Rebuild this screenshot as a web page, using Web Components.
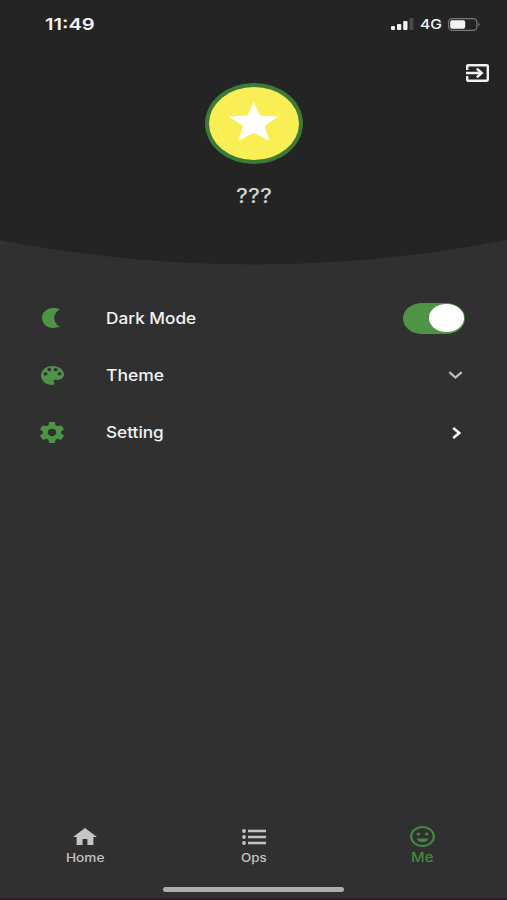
<!DOCTYPE html>
<html lang="en">
<head>
<meta charset="utf-8">
<title>Me</title>
<style>
    body {
        margin: 0;
        background-color: #303030;
        font-family: Inter, "Liberation Sans", sans-serif;
        color: #f2f2f2;
    }
</style>
</head>
<body>
<me-page></me-page>

<script>
const icons = {
    // each one: viewBox, markup
    exit: ['0 0 23 18', '<g fill="none" stroke="currentColor" stroke-width="2.4"><path d="M1.2 6V2.4Q1.2 1.2 2.6 1.2H20.3Q21.8 1.2 21.8 2.4V15.6Q21.8 16.8 20.3 16.8H2.6Q1.2 16.8 1.2 15.6V12M0 9H15.5M10.8 4.6L15.8 9L10.8 13.4"/></g>'],
    star: ['0 0 49 39', '<path d="M24.5 0L31 13.5L49 14.6L35.5 24L40.5 39L24.5 30.5L9.5 39L14 24L0 14.6L18.5 13.5Z"/>'],
    moon: ['0 0 18 20', '<path d="M18 1.4C15.5 .3 13 0 11.5 0C4.5 0 0 4.5 0 10S4.5 20 11.5 20C13 20 15.5 19.7 18 18.6C14 17 12.3 13 12.3 10S14 3 18 1.4Z"/>'],
    palette: ['3 3 18 18', '<path d="M12 3c-4.97 0-9 4.03-9 9s4.03 9 9 9c.83 0 1.5-.67 1.5-1.5 0-.39-.15-.74-.39-1.01-.23-.26-.38-.61-.38-.99 0-.83.67-1.5 1.5-1.5H16c2.76 0 5-2.24 5-5 0-4.42-4.03-8-9-8zm-5.5 9c-.83 0-1.5-.67-1.5-1.5S5.67 9 6.5 9 8 9.67 8 10.5 7.33 12 6.5 12zm3-4C8.67 8 8 7.33 8 6.5S8.67 5 9.5 5s1.5.67 1.5 1.5S10.33 8 9.5 8zm5 0c-.83 0-1.5-.67-1.5-1.5S13.67 5 14.5 5s1.5.67 1.5 1.5S15.33 8 14.5 8zm3 4c-.83 0-1.5-.67-1.5-1.5S16.67 9 17.5 9s1.5.67 1.5 1.5-.67 1.5-1.5 1.5z"/>'],
    gear: ['2.2 2 19.6 20', '<path d="M19.43 12.98c.04-.32.07-.64.07-.98s-.03-.66-.07-.98l2.11-1.65c.19-.15.24-.42.12-.64l-2-3.46c-.12-.22-.39-.3-.61-.22l-2.49 1c-.52-.4-1.08-.73-1.69-.98l-.38-2.65C14.46 2.18 14.25 2 14 2h-4c-.25 0-.46.18-.49.42l-.38 2.65c-.61.25-1.17.59-1.69.98l-2.49-1c-.23-.09-.49 0-.61.22l-2 3.46c-.13.22-.07.49.12.64l2.11 1.65c-.04.32-.07.65-.07.98s.03.66.07.98l-2.11 1.65c-.19.15-.24.42-.12.64l2 3.46c.12.22.39.3.61.22l2.49-1c.52.4 1.08.73 1.69.98l.38 2.65c.03.24.24.42.49.42h4c.25 0 .46-.18.49-.42l.38-2.65c.61-.25 1.17-.59 1.69-.98l2.49 1c.23.09.49 0 .61-.22l2-3.46c.12-.22.07-.49-.12-.64l-2.11-1.65zM12 15.5c-1.93 0-3.5-1.57-3.5-3.5s1.57-3.5 3.5-3.5 3.5 1.57 3.5 3.5-1.57 3.5-3.5 3.5z"/>'],
    down: ['0 0 15 8', '<path d="M1.3 1.2L7.5 6.5L13.7 1.2" fill="none" stroke="currentColor" stroke-width="2.3"/>'],
    right: ['0 0 9 12', '<path d="M1.2 1L7.3 6L1.2 11" fill="none" stroke="currentColor" stroke-width="2.5"/>'],
    home: ['2 3 20 17', '<path d="M10 20v-6h4v6h5v-8h3L12 3 2 12h3v8z"/>'],
    list: ['0 0 24 16', '<circle cx="2" cy="2" r="1.9"/><circle cx="2" cy="8" r="1.9"/><circle cx="2" cy="14" r="1.9"/><path d="M6 .8h18v2.4H6zM6 6.8h18v2.4H6zM6 12.8h18v2.4H6z"/>'],
    smile: ['0 0 25 22', '<ellipse cx="12.5" cy="11" rx="11.3" ry="9.9" fill="none" stroke="currentColor" stroke-width="2.1"/><ellipse cx="8.3" cy="8.4" rx="1.8" ry="1.6"/><ellipse cx="16.7" cy="8.4" rx="1.8" ry="1.6"/><path d="M6.5 13H18.5Q16.8 17 12.5 17T6.5 13Z"/>'],
    signal: ['0 0 23 12', '<rect x="0" y="8" width="4" height="4" rx="1"/><rect x="6" y="6" width="4.3" height="6" rx="1"/><rect x="12.2" y="3" width="4.3" height="9" rx="1"/><rect x="18.5" y="0" width="4" height="12" rx="1" fill="#4a4a4a"/>'],
    battery: ['0 0 33 13', '<rect x=".6" y=".6" width="28.3" height="11.8" rx="3.6" fill="none" stroke="#777" stroke-width="1.2"/><rect x="2.2" y="2.2" width="15" height="8.6" rx="2"/><path d="M30.5 4.5Q32.6 6.5 30.5 8.5Z" fill="#888"/>']
};

class UiIcon extends HTMLElement {
    connectedCallback() {
        const [box, markup] = icons[this.getAttribute('name')];
        const w = this.getAttribute('w');
        const h = this.getAttribute('h');
        this.attachShadow({ mode: 'open' }).innerHTML = `
<style>
    :host { display: block; flex: none; width: ${w}px; height: ${h}px; }
    svg { display: block; width: 100%; height: 100%; fill: currentColor; }
</style>
<svg viewBox="${box}" preserveAspectRatio="none">${markup}</svg>`;
    }
}

// text stretched sideways to the width given in "w"
class WideText extends HTMLElement {
    connectedCallback() {
        const w = this.getAttribute('w');
        this.attachShadow({ mode: 'open' }).innerHTML = `
<style>
    :host { display: block; flex: none; width: ${w}px; line-height: 20px; white-space: nowrap; }
    span { display: inline-block; transform-origin: 0 50%; }
</style>
<span><slot></slot></span>`;
        const span = this.shadowRoot.querySelector('span');
        span.style.transform = `scaleX(${w / span.offsetWidth})`;
    }
}

class StatusBar extends HTMLElement {
    connectedCallback() {
        this.attachShadow({ mode: 'open' }).innerHTML = `
<style>
    :host { display: flex; align-items: center; justify-content: space-between; height: 48px; padding: 0 26px 0 45px; }
    .time { font-size: 16.5px; font-weight: 600; }
    .right { display: flex; align-items: center; }
    .net { font-size: 13.5px; font-weight: 500; margin: 0 6px 0 6px; }
</style>
<wide-text class="time" w="50">11:49</wide-text>
<div class="right">
    <ui-icon name="signal" w="23" h="12"></ui-icon>
    <wide-text class="net" w="22">4G</wide-text>
    <ui-icon name="battery" w="33" h="13"></ui-icon>
</div>`;
    }
}

class ProfileHeader extends HTMLElement {
    connectedCallback() {
        this.attachShadow({ mode: 'open' }).innerHTML = `
<style>
    :host { display: block; height: 265px; background-color: #242424; clip-path: path("M0 0H507V240Q253.5 289 0 240Z"); }
    .actions { display: flex; justify-content: flex-end; padding: 16px 18px 0 0; height: 19px; }
    .profile { display: flex; flex-direction: column; align-items: center; }
    .avatar {
        box-sizing: border-box;
        display: flex;
        justify-content: center;
        width: 98px;
        height: 81px;
        padding-top: 15px;
        border: 4px solid #3c7a38;
        border-radius: 50%;
        background-color: #f9ef55;
        color: white;
    }
    .name { margin-top: 22px; font-size: 19.5px; font-weight: 500; color: #d0d0d0; }
</style>
<status-bar></status-bar>
<div class="actions"><ui-icon name="exit" w="23" h="18"></ui-icon></div>
<div class="profile">
    <div class="avatar"><ui-icon name="star" w="49" h="39"></ui-icon></div>
    <wide-text class="name" w="36"><slot></slot></wide-text>
</div>`;
    }
}

class ToggleSwitch extends HTMLElement {
    connectedCallback() {
        this.attachShadow({ mode: 'open' }).innerHTML = `
<style>
    :host {
        box-sizing: border-box;
        display: flex;
        justify-content: flex-end;
        width: 62px;
        height: 31px;
        padding: 1.3px 1px;
        border-radius: 19px / 15.5px;
        background-color: #4f9446;
    }
    i { width: 35px; border-radius: 50%; background-color: white; }
</style>
<i></i>`;
    }
}

class SettingRow extends HTMLElement {
    connectedCallback() {
        this.attachShadow({ mode: 'open' }).innerHTML = `
<style>
    :host { display: grid; grid-template-columns: 66px 1fr auto; align-items: center; height: 57.3px; }
    .icon { display: flex; justify-content: center; width: 24px; color: #4f9446; }
    .label { padding-top: 1.2px; font-size: 15.7px; font-weight: 500; }
</style>
<div class="icon"><slot name="icon"></slot></div>
<div class="label"><slot></slot></div>
<slot name="end"></slot>`;
    }
}

class TabItem extends HTMLElement {
    connectedCallback() {
        this.attachShadow({ mode: 'open' }).innerHTML = `
<style>
    :host { display: flex; flex: 1; flex-direction: column; align-items: center; font-size: 11.8px; font-weight: 500; color: #c4c4c4; }
    :host([active]) { color: #43893c; font-size: 13px; }
    .icon { display: flex; align-items: center; height: 21px; padding-bottom: 1px; }
    :host([active]) .icon { padding-bottom: 0; }
</style>
<div class="icon"><slot name="icon"></slot></div>
<slot></slot>`;
    }
}

class MePage extends HTMLElement {
    connectedCallback() {
        this.attachShadow({ mode: 'open' }).innerHTML = `
<style>
    :host {
        box-sizing: border-box;
        display: flex;
        flex-direction: column;
        width: 507px;
        height: 900px;
        border-bottom: 2px solid #2c2028;
        overflow: hidden;
    }
    .settings { flex: 1; padding: 24.5px 42px 0 40px; }
    .tabs { display: flex; height: 61px; }
    .home-bar { width: 181px; height: 5px; margin: 0 auto 6px; border-radius: 3px; background-color: #adadad; }
    .moon { margin-right: 2px; }
    .down { margin-right: 2px; color: #bebebe; }
    .right { margin-right: 4px; color: #fff; }
</style>
<profile-header>???</profile-header>
<div class="settings">
    <setting-row>
        <ui-icon slot="icon" class="moon" name="moon" w="18" h="20"></ui-icon>
        <wide-text w="90">Dark Mode</wide-text>
        <toggle-switch slot="end"></toggle-switch>
    </setting-row>
    <setting-row>
        <ui-icon slot="icon" name="palette" w="23" h="19"></ui-icon>
        <wide-text w="58">Theme</wide-text>
        <ui-icon slot="end" class="down" name="down" w="15" h="8"></ui-icon>
    </setting-row>
    <setting-row>
        <ui-icon slot="icon" name="gear" w="24" h="21"></ui-icon>
        <wide-text w="58">Setting</wide-text>
        <ui-icon slot="end" class="right" name="right" w="9" h="12"></ui-icon>
    </setting-row>
</div>
<div class="tabs">
    <tab-item>
        <ui-icon slot="icon" name="home" w="24" h="17"></ui-icon>
        <wide-text w="38">Home</wide-text>
    </tab-item>
    <tab-item>
        <ui-icon slot="icon" name="list" w="24" h="16"></ui-icon>
        <wide-text w="26">Ops</wide-text>
    </tab-item>
    <tab-item active>
        <ui-icon slot="icon" name="smile" w="25" h="21"></ui-icon>
        <wide-text w="23">Me</wide-text>
    </tab-item>
</div>
<div class="home-bar"></div>`;
    }
}

customElements.define('ui-icon', UiIcon);
customElements.define('wide-text', WideText);
customElements.define('status-bar', StatusBar);
customElements.define('toggle-switch', ToggleSwitch);
customElements.define('profile-header', ProfileHeader);
customElements.define('setting-row', SettingRow);
customElements.define('tab-item', TabItem);
customElements.define('me-page', MePage);
</script>
</body>
</html>
